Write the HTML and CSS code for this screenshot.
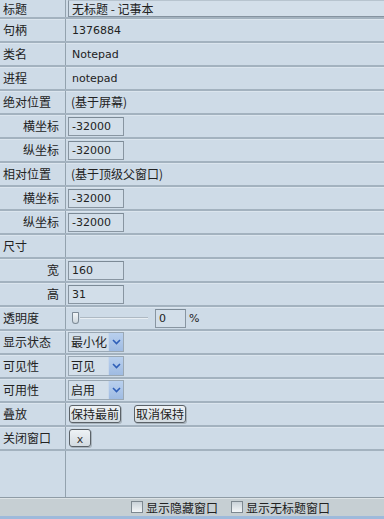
FILE: index.html
```html
<!DOCTYPE html>
<html>
<head>
<meta charset="utf-8">
<link rel="stylesheet" href="styles.css">
</head>
<body>
<div class="app">
  <div class="panel">
    <div class="row first"><div class="lab">标题</div><div class="val"><div class="tbox">无标题 - 记事本</div></div></div>
    <div class="row"><div class="lab">句柄</div><div class="val"><span class="txt lat">1376884</span></div></div>
    <div class="row"><div class="lab">类名</div><div class="val"><span class="txt lat">Notepad</span></div></div>
    <div class="row"><div class="lab">进程</div><div class="val"><span class="txt lat">notepad</span></div></div>
    <div class="row"><div class="lab">绝对位置</div><div class="val"><span class="txt">(基于屏幕)</span></div></div>
    <div class="row"><div class="lab sub">横坐标</div><div class="val"><div class="ibox lat">-32000</div></div></div>
    <div class="row"><div class="lab sub">纵坐标</div><div class="val"><div class="ibox lat">-32000</div></div></div>
    <div class="row"><div class="lab">相对位置</div><div class="val"><span class="txt">(基于顶级父窗口)</span></div></div>
    <div class="row"><div class="lab sub">横坐标</div><div class="val"><div class="ibox lat">-32000</div></div></div>
    <div class="row"><div class="lab sub">纵坐标</div><div class="val"><div class="ibox lat">-32000</div></div></div>
    <div class="row"><div class="lab">尺寸</div><div class="val"></div></div>
    <div class="row"><div class="lab sub">宽</div><div class="val"><div class="ibox lat">160</div></div></div>
    <div class="row"><div class="lab sub">高</div><div class="val"><div class="ibox lat">31</div></div></div>
    <div class="row"><div class="lab">透明度</div><div class="val">
      <div class="slider"><span class="thumb"></span><span class="track"></span></div>
      <div class="pbox lat">0</div><span class="pct lat">%</span>
    </div></div>
    <div class="row"><div class="lab">显示状态</div><div class="val"><div class="sel"><span class="stext">最小化</span><span class="sbtn"><svg width="9" height="6" viewBox="0 0 9 6"><path d="M1 1 L4.5 4.5 L8 1" fill="none" stroke="#2f5fb8" stroke-width="1.6"/></svg></span></div></div></div>
    <div class="row"><div class="lab">可见性</div><div class="val"><div class="sel"><span class="stext">可见</span><span class="sbtn"><svg width="9" height="6" viewBox="0 0 9 6"><path d="M1 1 L4.5 4.5 L8 1" fill="none" stroke="#2f5fb8" stroke-width="1.6"/></svg></span></div></div></div>
    <div class="row"><div class="lab">可用性</div><div class="val"><div class="sel"><span class="stext">启用</span><span class="sbtn"><svg width="9" height="6" viewBox="0 0 9 6"><path d="M1 1 L4.5 4.5 L8 1" fill="none" stroke="#2f5fb8" stroke-width="1.6"/></svg></span></div></div></div>
    <div class="row"><div class="lab">叠放</div><div class="val"><span class="btn">保持最前</span><span class="btn b2">取消保持</span></div></div>
    <div class="row"><div class="lab">关闭窗口</div><div class="val"><span class="btn xbtn lat">x</span></div></div>
    <div class="filler"><div class="lab"></div><div class="val"></div></div>
  </div>
  <div class="status">
    <span class="cb"></span><span class="cbl">显示隐藏窗口</span>
    <span class="cb c2"></span><span class="cbl">显示无标题窗口</span>
  </div>
</div>
</body>
</html>
```
FILE: styles.css
```css
* { box-sizing: border-box; }
html, body { margin: 0; padding: 0; }
body {
  width: 384px;
  height: 519px;
  overflow: hidden;
  background: #cfdce8;
  font-family: "Noto Sans CJK SC", "DejaVu Sans", sans-serif;
  font-size: 12px;
  color: #222;
}
.app { display: flex; flex-direction: column; height: 519px; }
.panel { display: flex; flex-direction: column; flex: 1; background: #cedbe7; }
.row {
  display: flex;
  height: 24px;
  border-bottom: 2px solid #a3b2bf;
  box-shadow: 0 1px 0 #dbe5ee inset;
}
.row.first { height: 19px; box-shadow: none; }
.lab {
  width: 66px;
  border-right: 1px solid #93a2ae;
  padding-left: 3px;
  display: flex;
  align-items: center;
  line-height: 1;
  white-space: nowrap;
}
.lab.sub { justify-content: flex-end; padding-right: 6px; padding-left: 0; }
.val {
  flex: 1;
  display: flex;
  align-items: center;
  padding-left: 2px;
  line-height: 1;
  white-space: nowrap;
}
.lat { font-family: "DejaVu Sans", sans-serif; font-size: 11px; }
.txt { padding-left: 3px; }
.txt.lat { padding-left: 4px; }
.first .val { align-items: flex-start; }
.tbox {
  flex: 1;
  height: 17px;
  border: 1px solid #8593a0;
  border-right: none;
  border-top-color: #b7c4cf;
  background: #d3dfea;
  padding-left: 3px;
  display: flex;
  align-items: center;
}
.ibox, .pbox {
  width: 56px;
  height: 19px;
  border: 1px solid #8895a1;
  border-top-color: #7c8a96;
  background: #d2dee9;
  padding-left: 3px;
  display: flex;
  align-items: center;
}
.slider { width: 82px; height: 19px; display: flex; align-items: center; margin-left: 4px; }
.track { flex: 1; height: 2px; background: #aeb9c3; border-bottom: 1px solid #e8eef3; margin-left: 1px; margin-right: 6px; }
.thumb {
  width: 7px; height: 12px;
  border: 1px solid #7d8a96;
  border-radius: 1px 1px 4px 4px;
  background: linear-gradient(#f2f5f7, #cfd8df);
}
.pbox { width: 31px; margin-left: 1px; }
.pct { margin-left: 3px; }
.sel {
  width: 56px;
  height: 20px;
  border: 1px solid #9aa8b4;
  background: #d3dfea;
  display: flex;
  align-items: stretch;
}
.stext { flex: 1; display: flex; align-items: center; padding-left: 2px; }
.sbtn {
  width: 15px;
  background: linear-gradient(#b9d0ee, #9fbbe2);
  border-left: 1px solid #c9d8ea;
  display: flex; align-items: center; justify-content: center;
}
.btn {
  height: 18px;
  padding: 0 1px;
  border: 1px solid #5b6268;
  border-radius: 3px;
  background: linear-gradient(#eef2f5, #d3dbe1);
  display: flex; align-items: center;
  margin-left: 1px;
  box-shadow: 1px 1px 0 #a9b4bd;
}
.b2 { margin-left: 13px; }
.xbtn { width: 22px; justify-content: center; padding: 2px 0 0 0; color: #333; }
.filler { flex: 1; display: flex; border-bottom: 1px solid #8f9ca6; }
.status {
  height: 21px;
  background: #c6cfd3;
  border-bottom: 3px solid #9ebadb;
  display: flex;
  align-items: center;
  padding-left: 131px;
  box-shadow: 0 1px 0 #dde3e6 inset;
}
.cb {
  width: 12px; height: 12px;
  border: 1px solid #7d8890;
  background: linear-gradient(#c9d2d8, #f3f6f8);
}
.cbl { margin-left: 3px; }
.c2 { margin-left: 13px; }
```
